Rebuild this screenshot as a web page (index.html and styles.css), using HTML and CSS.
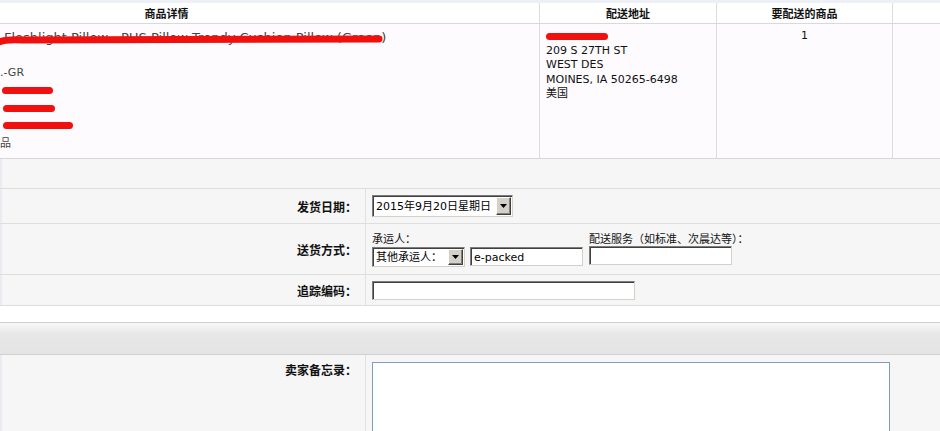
FILE: index.html
```html
<!DOCTYPE html>
<html lang="zh-CN">
<head>
<meta charset="utf-8">
<title>发货</title>
<link rel="stylesheet" href="styles.css">
</head>
<body>
<div class="top-strip"></div>
<div class="items">
  <div class="hcell c1">商品详情</div>
  <div class="hcell bl">配送地址</div>
  <div class="hcell bl">要配送的商品</div>
  <div class="hcell bl"></div>

  <div class="bcell c1">
    <div class="prod">
      <div class="title">Fleshlight Pillow - PHS Pillow Trendy Cushion Pillow (Green)
        <svg class="scribble" width="392" height="12" viewBox="0 0 392 12"><path d="M4 8 Q10 4 30 5 L386 4" stroke="#f0100f" stroke-width="7" fill="none" stroke-linecap="round"/></svg>
      </div>
      <div class="pline">&nbsp;</div>
      <div class="pline sku">.-GR</div>
      <div class="pline"><span class="redbar" style="width:51px;margin-left:8px"></span></div>
      <div class="pline"><span class="redbar" style="width:52px;margin-left:9px"></span></div>
      <div class="pline"><span class="redbar" style="width:70px;margin-left:9px"></span></div>
      <div class="pline cjk">品</div>
    </div>
  </div>
  <div class="bcell bl addr">
    <div class="aline"><span class="redbar" style="width:62px"></span></div>
    <div class="aline">209 S 27TH ST</div>
    <div class="aline">WEST DES</div>
    <div class="aline">MOINES, IA 50265-6498</div>
    <div class="aline">美国</div>
  </div>
  <div class="bcell bl qty">1</div>
  <div class="bcell bl"></div>
</div>

<div class="ship-head"></div>

<div class="frow r-date">
  <div class="flabel">发货日期：</div>
  <div class="fval center">
    <span class="combo combo-date">
      <select><option>2015年9月20日星期日</option></select>
      <span class="drop"><svg width="7" height="4" viewBox="0 0 7 4"><polygon points="0,0 7,0 3.5,4" fill="#000"/></svg></span>
    </span>
  </div>
</div>

<div class="frow r-ship">
  <div class="flabel mid">送货方式：</div>
  <div class="fval ship">
    <div class="grp">
      <div class="small">承运人：</div>
      <div class="pair">
        <span class="combo combo-carrier">
          <select><option>其他承运人：</option></select>
          <span class="drop"><svg width="7" height="4" viewBox="0 0 7 4"><polygon points="0,0 7,0 3.5,4" fill="#000"/></svg></span>
        </span>
        <input class="tin tin-carrier" type="text" value="e-packed">
      </div>
    </div>
    <div class="grp">
      <div class="small">配送服务（如标准、次晨达等）：</div>
      <input class="tin tin-service" type="text" value="">
    </div>
  </div>
</div>

<div class="frow r-track">
  <div class="flabel">追踪编码：</div>
  <div class="fval center">
    <input class="tin tin-track" type="text" value="">
  </div>
</div>

<div class="spacer"></div>
<div class="band"></div>

<div class="frow r-memo">
  <div class="flabel top">卖家备忘录：</div>
  <div class="fval">
    <textarea class="memo"></textarea>
  </div>
</div>
</body>
</html>
```

FILE: styles.css
```css
html, body {
  margin: 0;
  padding: 0;
  overflow: hidden;
  background: #f6f6f6;
  font-family: "DejaVu Sans", "Noto Sans CJK SC", sans-serif;
  font-size: 11px;
  color: #222;
}

.top-strip {
  height: 3px;
  background: #edf1f7;
}

.items {
  display: grid;
  grid-template-columns: 642px 177px 176px 48px;
  margin-left: -103px;
  width: 1043px;
}

.hcell {
  box-sizing: border-box;
  height: 21px;
  line-height: 20px;
  background: #fff;
  border-bottom: 1px solid #d9d9d9;
  text-align: center;
  font-family: "Noto Sans CJK SC", sans-serif;
  font-weight: bold;
  font-size: 11px;
  color: #111;
}

.bl {
  border-left: 1px solid #dcdcdc;
}

.hcell.c1 {
  padding-right: 103px;
}

.bcell {
  height: 135px;
  box-sizing: border-box;
  background: #fdfbfe;
  border-bottom: 1px solid #d6d6d6;
  padding-top: 5px;
}

.bcell.c1 {
  padding-left: 97px;
  overflow: hidden;
}

.prod {
  font-size: 11px;
  color: #444;
}

.title {
  position: relative;
  margin-left: 10px;
  line-height: 17.5px;
  height: 17.5px;
  font-size: 13px;
  color: #444;
  white-space: nowrap;
}

.scribble {
  position: absolute;
  left: -11px;
  top: 6px;
}

.pline {
  height: 17.5px;
  line-height: 17.5px;
  white-space: nowrap;
  color: #444;
}

.pline.sku {
  margin-left: 6px;
}

.pline.cjk {
  margin-left: 6px;
  font-family: "Noto Sans CJK SC", sans-serif;
  font-size: 11px;
}

.redbar {
  display: inline-block;
  height: 7px;
  background: #f0100f;
  border-radius: 4px;
  vertical-align: middle;
}

.addr {
  padding-left: 6px;
}

.aline {
  line-height: 14.5px;
  height: 14.5px;
  color: #111;
  white-space: nowrap;
}

.qty {
  text-align: center;
  line-height: 14.5px;
  color: #111;
}

.ship-head {
  height: 30px;
  box-sizing: border-box;
  border-bottom: 1px solid #dedede;
  background: #f6f6f6;
  box-shadow: inset 2px 0 0 #e8ecf1;
}

.frow {
  display: grid;
  grid-template-columns: 366px 1fr;
  background: #f6f6f6;
  border-bottom: 1px solid #dedede;
  box-shadow: inset 2px 0 0 #e8ecf1;
}

.flabel {
  border-right: 1px solid #e0e0e0;
  text-align: right;
  padding-right: 8px;
  font-family: "Noto Sans CJK SC", sans-serif;
  font-weight: bold;
  font-size: 12px;
  color: #111;
  display: flex;
  align-items: center;
  justify-content: flex-end;
}

.flabel.top {
  align-items: flex-start;
  padding-top: 8px;
  line-height: 14px;
}

.fval {
  padding-left: 6px;
}

.fval.center {
  display: flex;
  align-items: center;
}

.r-date { height: 35px; box-sizing: border-box; }
.r-ship { height: 51px; box-sizing: border-box; }
.r-track { height: 31px; box-sizing: border-box; }

.ship {
  display: flex;
  gap: 6px;
  padding-top: 6px;
}

.grp {
  display: flex;
  flex-direction: column;
}

.small {
  font-family: "Noto Sans CJK SC", sans-serif;
  font-size: 11px;
  line-height: 16px;
  height: 17px;
  color: #111;
}

.pair {
  display: flex;
  gap: 5px;
}

.combo {
  display: inline-flex;
  box-sizing: border-box;
  border: 1px solid;
  border-color: #7c7c7c #d4d0c8 #d4d0c8 #7c7c7c;
  box-shadow: inset 1px 1px 0 #404040;
  background: #fff;
  padding: 1px 1px 0 1px;
}

.combo select {
  appearance: none;
  -webkit-appearance: none;
  border: 0;
  background: transparent;
  flex: 1;
  min-width: 0;
  padding: 0 0 0 2px;
  margin: 0;
  font-family: "DejaVu Sans", "Noto Sans CJK SC", sans-serif;
  font-size: 11px;
  color: #000;
  outline: none;
}

.combo-date { width: 141px; height: 22px; }
.combo-carrier { width: 93px; height: 20px; }

.drop {
  width: 15px;
  box-sizing: border-box;
  background: #d4d0c8;
  border: 1px solid;
  border-color: #fff #404040 #404040 #fff;
  box-shadow: inset -1px -1px 0 #808080;
  display: flex;
  align-items: center;
  justify-content: center;
  margin-bottom: 1px;
}

.tin {
  box-sizing: border-box;
  height: 19px;
  margin: 0;
  border: 1px solid;
  border-color: #7c7c7c #d4d0c8 #d4d0c8 #7c7c7c;
  box-shadow: inset 1px 1px 0 #404040;
  background: #fff;
  padding: 1px 0 0 3px;
  font-family: "DejaVu Sans", sans-serif;
  font-size: 11px;
  color: #000;
  outline: none;
}

.tin-carrier { width: 113px; }
.tin-service { width: 143px; margin-top: -1px; }
.tin-track { width: 263px; }

.spacer {
  height: 17px;
  box-sizing: border-box;
  background: #fff;
  border-bottom: 1px solid #cfcfcf;
}

.band {
  height: 32px;
  box-sizing: border-box;
  background: linear-gradient(#f8f8f8, #e7e7e7 35%, #e4e4e4);
  border-bottom: 1px solid #d0d0d0;
}

.r-memo {
  height: 120px;
  border-bottom: 0;
}

.memo {
  display: block;
  margin-top: 7px;
  width: 518px;
  height: 90px;
  box-sizing: border-box;
  border: 1px solid #7f9db9;
  background: #fff;
  resize: both;
  outline: none;
}
```
